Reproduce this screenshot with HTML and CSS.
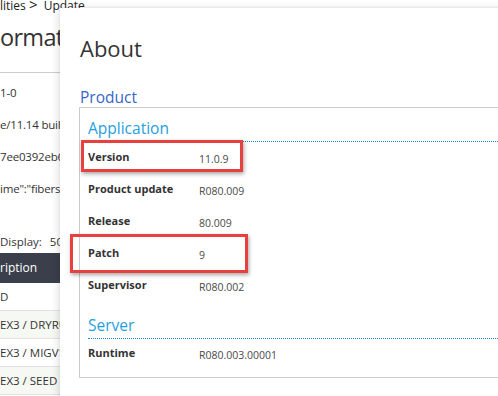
FILE: index.html
```html
<!DOCTYPE html>
<html lang="en">
  <head>
  <link rel="stylesheet" href="styles.css">
  </head>
  <body>
    <div class="page">
      <div class="crumbs">lities <b>&gt;</b> <span>Update</span></div>
      <h1 class="title">ormation</h1>
      <div class="info">
        <div class="info-row">1-0</div>
        <div class="info-row">e/11.14 build</div>
        <div class="info-row">7ee0392eb6</div>
        <div class="info-row">ime":"fibers"</div>
      </div>
      <div class="display">Display: <span>50</span></div>
      <div class="table">
        <div class="table-head">ription</div>
        <div class="table-row">D</div>
        <div class="table-row alt">EX3 / DRYRUN</div>
        <div class="table-row">EX3 / MIGV1</div>
        <div class="table-row alt">EX3 / SEED</div>
      </div>
    </div>

    <div class="modal">
      <h2 class="modal-title">About</h2>
      <h3 class="group-title">Product</h3>
      <div class="group">
        <div class="section">
          <h4 class="section-title">Application</h4>
          <div class="prop mark">
            <span class="prop-name">Version</span>
            <span class="prop-value">11.0.9</span>
          </div>
          <div class="prop">
            <span class="prop-name">Product update</span>
            <span class="prop-value">R080.009</span>
          </div>
          <div class="prop">
            <span class="prop-name">Release</span>
            <span class="prop-value">80.009</span>
          </div>
          <div class="prop mark mark-wide">
            <span class="prop-name">Patch</span>
            <span class="prop-value">9</span>
          </div>
          <div class="prop">
            <span class="prop-name">Supervisor</span>
            <span class="prop-value">R080.002</span>
          </div>
        </div>
        <div class="section">
          <h4 class="section-title">Server</h4>
          <div class="prop">
            <span class="prop-name">Runtime</span>
            <span class="prop-value">R080.003.00001</span>
          </div>
        </div>
      </div>
    </div>
  </body>
</html>
```

FILE: styles.css
```css
html, body { height: 100%; padding: 0; margin: 0; }
body {
  position: relative; overflow: hidden; background: #fff;
  color: #333; font: 12px/1.4 "Open Sans", "Noto Sans", sans-serif;
}
h1, h2, h3, h4 { margin: 0; font-weight: normal; }

/* page behind the dialog */
.page { white-space: nowrap; }
.crumbs { font-size: 12px; line-height: 16px; margin-top: -4px; color: #222; }
.crumbs b { font-size: 15px; font-weight: normal; }
.crumbs span { margin-left: 3px; }
.title {
  font-size: 23.5px; line-height: 36px; margin-top: 5px; color: #333;
  letter-spacing: -0.7px;
}
.info { border-top: 1px solid #ccc; margin-top: 17px; padding-top: 4px; }
.info-row { height: 32px; line-height: 32px; font-size: 11.5px; letter-spacing: -0.2px; }
.display { margin-top: 27px; font-size: 11.5px; line-height: 20px; }
.display span { margin-left: 5px; }
.table { margin-top: 1px; }
.table-head {
  background: #3b3f4b; color: #fff; height: 30px; line-height: 30px;
  font-size: 12px;
}
.table-row {
  height: 27px; line-height: 27px; font-size: 11.5px;
  border-bottom: 1px solid #e3e3e3;
}
.table-row.alt, .table-row:nth-child(3) { background: #f6f8f3; }

/* dialog */
.modal {
  position: absolute; left: 60px; top: 8px; width: 470px; height: 420px;
  background: #fff; padding: 0 0 0 19px; box-sizing: border-box;
  box-shadow: -2px 0 7px rgba(0, 0, 0, .12), 0 -1px 2px rgba(0, 0, 0, .05);
}
.modal-title { font-size: 22px; line-height: 32px; margin-top: 24px; padding-left: 1px; color: #333; }
.group-title {
  font-size: 15.5px; line-height: 20px; margin-top: 23px; padding-left: 1px;
  color: #3766c8;
}
.group {
  border: 1px solid #ccc; border-right: none;
  padding: 10px 0 8px 8px;
}
.section-title {
  font-size: 15.5px; line-height: 20px; color: #1f9ee0;
  border-bottom: 1px dotted #1a8fd0; padding-bottom: 3px;
}
.section + .section { margin-top: 14px; }
.prop { display: flex; height: 32px; align-items: center; position: relative; }
.section-title + .prop { margin-top: -1px; }
.section + .section .prop { margin-top: -2px; }
.prop-name { width: 111px; font-weight: bold; font-size: 11px; color: #333; }
.prop-value { font-size: 10.5px; color: #4a4a4a; padding-top: 4px; }

/* red highlight boxes drawn over the screenshot */
.mark::after {
  content: ""; position: absolute; left: -7px; top: -1px; width: 156px; height: 26px;
  border: 3px solid #e8403f; box-shadow: 1px 2px 4px rgba(0, 0, 0, .35);
}
.mark-wide::after { left: -18px; top: -3px; width: 172px; height: 33px; }
```
